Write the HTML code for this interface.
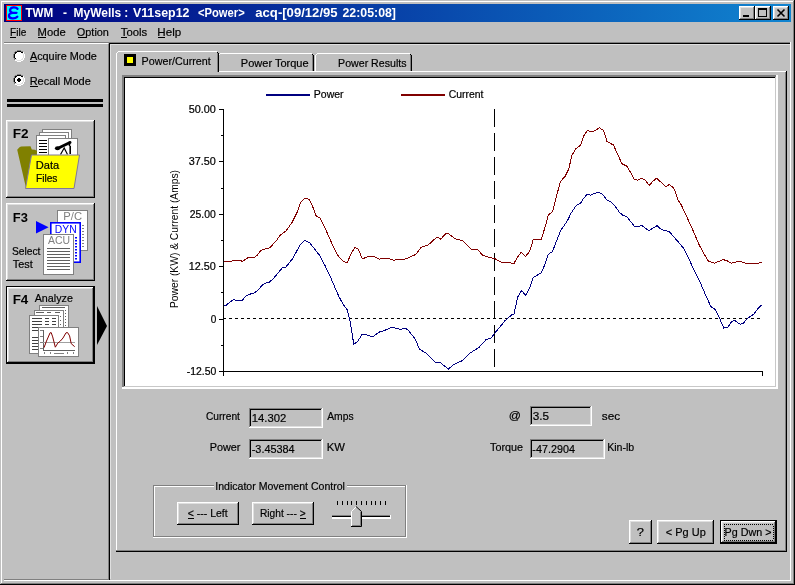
<!DOCTYPE html>
<html><head><meta charset="utf-8"><title>TWM</title>
<style>
html,body{margin:0;padding:0;background:#c0c0c0;width:795px;height:585px;overflow:hidden}
svg{display:block;font-family:"Liberation Sans",sans-serif;will-change:transform}
</style></head><body>
<svg width="795" height="585" viewBox="0 0 795 585">
<rect x="0" y="0" width="795" height="585" fill="#c0c0c0"/>
<rect x="1" y="1" width="793" height="1" fill="#fff"/>
<rect x="1" y="1" width="1" height="583" fill="#fff"/>
<rect x="0" y="584" width="795" height="1" fill="#000"/>
<rect x="794" y="0" width="1" height="585" fill="#000"/>
<rect x="1" y="583" width="793" height="1" fill="#808080"/>
<rect x="793" y="1" width="1" height="583" fill="#808080"/>
<defs><linearGradient id="tg" x1="0" x2="1" y1="0" y2="0"><stop offset="0" stop-color="#000080"/><stop offset="1" stop-color="#1084d0"/></linearGradient></defs>
<rect x="4" y="4" width="787" height="18" fill="url(#tg)"/>
<rect x="6" y="5" width="16" height="16" fill="#ff0000"/>
<rect x="7" y="6" width="14" height="14" fill="#00ffff"/>
<path d="M17.5,8.8 C16,6.8 11.2,6.6 10.2,9.5 C9.6,11.5 11.5,12.6 13,12.8 H16.5 M13,12.8 C10.5,12.8 8.8,14 9,16 C9.4,19 15.2,19 17.3,16.8" fill="none" stroke="#0000ff" stroke-width="2.3" stroke-linecap="round"/>
<text x="25.50" y="17" font-size="12" font-weight="bold" fill="#fff" textLength="27.84" lengthAdjust="spacingAndGlyphs">TWM</text>
<text x="63.00" y="17" font-size="12" font-weight="bold" fill="#fff" textLength="4.00" lengthAdjust="spacingAndGlyphs">-</text>
<text x="73.60" y="17" font-size="12" font-weight="bold" fill="#fff" textLength="47.69" lengthAdjust="spacingAndGlyphs">MyWells</text>
<text x="124.30" y="17" font-size="12" font-weight="bold" fill="#fff" textLength="4.00" lengthAdjust="spacingAndGlyphs">:</text>
<text x="132.90" y="17" font-size="12" font-weight="bold" fill="#fff" textLength="56.54" lengthAdjust="spacingAndGlyphs">V11sep12</text>
<text x="198.00" y="17" font-size="12" font-weight="bold" fill="#fff" textLength="46.73" lengthAdjust="spacingAndGlyphs">&lt;Power&gt;</text>
<text x="255.30" y="17" font-size="12" font-weight="bold" fill="#fff" textLength="82.33" lengthAdjust="spacingAndGlyphs">acq-[09/12/95</text>
<text x="342.50" y="17" font-size="12" font-weight="bold" fill="#fff" textLength="53.46" lengthAdjust="spacingAndGlyphs">22:05:08]</text>
<rect x="739" y="6" width="16" height="14" fill="#c0c0c0"/>
<rect x="739" y="6" width="16" height="1" fill="#fff"/>
<rect x="739" y="6" width="1" height="14" fill="#fff"/>
<rect x="740" y="7" width="14" height="1" fill="#dfdfdf"/>
<rect x="740" y="7" width="1" height="12" fill="#dfdfdf"/>
<rect x="740" y="18" width="14" height="1" fill="#808080"/>
<rect x="753" y="7" width="1" height="12" fill="#808080"/>
<rect x="739" y="19" width="16" height="1" fill="#000"/>
<rect x="754" y="6" width="1" height="14" fill="#000"/>
<rect x="755" y="6" width="16" height="14" fill="#c0c0c0"/>
<rect x="755" y="6" width="16" height="1" fill="#fff"/>
<rect x="755" y="6" width="1" height="14" fill="#fff"/>
<rect x="756" y="7" width="14" height="1" fill="#dfdfdf"/>
<rect x="756" y="7" width="1" height="12" fill="#dfdfdf"/>
<rect x="756" y="18" width="14" height="1" fill="#808080"/>
<rect x="769" y="7" width="1" height="12" fill="#808080"/>
<rect x="755" y="19" width="16" height="1" fill="#000"/>
<rect x="770" y="6" width="1" height="14" fill="#000"/>
<rect x="773" y="6" width="16" height="14" fill="#c0c0c0"/>
<rect x="773" y="6" width="16" height="1" fill="#fff"/>
<rect x="773" y="6" width="1" height="14" fill="#fff"/>
<rect x="774" y="7" width="14" height="1" fill="#dfdfdf"/>
<rect x="774" y="7" width="1" height="12" fill="#dfdfdf"/>
<rect x="774" y="18" width="14" height="1" fill="#808080"/>
<rect x="787" y="7" width="1" height="12" fill="#808080"/>
<rect x="773" y="19" width="16" height="1" fill="#000"/>
<rect x="788" y="6" width="1" height="14" fill="#000"/>
<rect x="743" y="15" width="6" height="2" fill="#000"/>
<rect x="758" y="8" width="9" height="9" fill="#000"/>
<rect x="759" y="10" width="7" height="6" fill="#c0c0c0"/>
<path d="M777.5,9.5 L784.5,16.5 M784.5,9.5 L777.5,16.5" stroke="#000" stroke-width="1.6"/>
<text x="10.12" y="36" font-size="11.5" fill="#000" stroke="#000" stroke-width="0.2" textLength="16.24" lengthAdjust="spacingAndGlyphs">File</text>
<text x="37.62" y="36" font-size="11.5" fill="#000" stroke="#000" stroke-width="0.2" textLength="28.14" lengthAdjust="spacingAndGlyphs">Mode</text>
<text x="76.85" y="36" font-size="11.5" fill="#000" stroke="#000" stroke-width="0.2" textLength="32.09" lengthAdjust="spacingAndGlyphs">Option</text>
<text x="120.80" y="36" font-size="11.5" fill="#000" stroke="#000" stroke-width="0.2" textLength="26.45" lengthAdjust="spacingAndGlyphs">Tools</text>
<text x="157.39" y="36" font-size="11.5" fill="#000" stroke="#000" stroke-width="0.2" textLength="23.87" lengthAdjust="spacingAndGlyphs">Help</text>
<rect x="10" y="37" width="6" height="1" fill="#000"/>
<rect x="38" y="37" width="8" height="1" fill="#000"/>
<rect x="78" y="37" width="8" height="1" fill="#000"/>
<rect x="121" y="37" width="6" height="1" fill="#000"/>
<rect x="158" y="37" width="7" height="1" fill="#000"/>
<rect x="4" y="42" width="787" height="1" fill="#808080"/>
<rect x="4" y="43" width="104" height="1" fill="#fff"/>
<rect x="109" y="43" width="681" height="1" fill="#000"/>
<rect x="109" y="43" width="1" height="537" fill="#000"/>
<rect x="108" y="44" width="1" height="536" fill="#808080"/>
<rect x="110" y="44" width="680" height="1" fill="#dfdfdf"/>
<rect x="110" y="44" width="1" height="535" fill="#dfdfdf"/>
<rect x="4" y="579" width="105" height="1" fill="#808080"/>
<rect x="4" y="580" width="787" height="1" fill="#fff"/>
<rect x="790" y="42" width="1" height="539" fill="#fff"/>
<rect x="17" y="50" width="1" height="1" fill="#808080"/>
<rect x="18" y="50" width="1" height="1" fill="#808080"/>
<rect x="19" y="50" width="1" height="1" fill="#808080"/>
<rect x="20" y="50" width="1" height="1" fill="#808080"/>
<rect x="15" y="51" width="1" height="1" fill="#808080"/>
<rect x="16" y="51" width="1" height="1" fill="#808080"/>
<rect x="17" y="51" width="1" height="1" fill="#000"/>
<rect x="18" y="51" width="1" height="1" fill="#000"/>
<rect x="19" y="51" width="1" height="1" fill="#000"/>
<rect x="20" y="51" width="1" height="1" fill="#000"/>
<rect x="21" y="51" width="1" height="1" fill="#808080"/>
<rect x="22" y="51" width="1" height="1" fill="#808080"/>
<rect x="14" y="52" width="1" height="1" fill="#808080"/>
<rect x="15" y="52" width="1" height="1" fill="#000"/>
<rect x="16" y="52" width="1" height="1" fill="#000"/>
<rect x="17" y="52" width="1" height="1" fill="#fff"/>
<rect x="18" y="52" width="1" height="1" fill="#fff"/>
<rect x="19" y="52" width="1" height="1" fill="#fff"/>
<rect x="20" y="52" width="1" height="1" fill="#fff"/>
<rect x="21" y="52" width="1" height="1" fill="#000"/>
<rect x="22" y="52" width="1" height="1" fill="#000"/>
<rect x="23" y="52" width="1" height="1" fill="#fff"/>
<rect x="14" y="53" width="1" height="1" fill="#808080"/>
<rect x="15" y="53" width="1" height="1" fill="#000"/>
<rect x="16" y="53" width="1" height="1" fill="#fff"/>
<rect x="17" y="53" width="1" height="1" fill="#fff"/>
<rect x="18" y="53" width="1" height="1" fill="#fff"/>
<rect x="19" y="53" width="1" height="1" fill="#fff"/>
<rect x="20" y="53" width="1" height="1" fill="#fff"/>
<rect x="21" y="53" width="1" height="1" fill="#fff"/>
<rect x="22" y="53" width="1" height="1" fill="#dfdfdf"/>
<rect x="23" y="53" width="1" height="1" fill="#fff"/>
<rect x="13" y="54" width="1" height="1" fill="#808080"/>
<rect x="14" y="54" width="1" height="1" fill="#000"/>
<rect x="15" y="54" width="1" height="1" fill="#fff"/>
<rect x="16" y="54" width="1" height="1" fill="#fff"/>
<rect x="17" y="54" width="1" height="1" fill="#fff"/>
<rect x="18" y="54" width="1" height="1" fill="#fff"/>
<rect x="19" y="54" width="1" height="1" fill="#fff"/>
<rect x="20" y="54" width="1" height="1" fill="#fff"/>
<rect x="21" y="54" width="1" height="1" fill="#fff"/>
<rect x="22" y="54" width="1" height="1" fill="#fff"/>
<rect x="23" y="54" width="1" height="1" fill="#dfdfdf"/>
<rect x="24" y="54" width="1" height="1" fill="#fff"/>
<rect x="13" y="55" width="1" height="1" fill="#808080"/>
<rect x="14" y="55" width="1" height="1" fill="#000"/>
<rect x="15" y="55" width="1" height="1" fill="#fff"/>
<rect x="16" y="55" width="1" height="1" fill="#fff"/>
<rect x="17" y="55" width="1" height="1" fill="#fff"/>
<rect x="18" y="55" width="1" height="1" fill="#fff"/>
<rect x="19" y="55" width="1" height="1" fill="#fff"/>
<rect x="20" y="55" width="1" height="1" fill="#fff"/>
<rect x="21" y="55" width="1" height="1" fill="#fff"/>
<rect x="22" y="55" width="1" height="1" fill="#fff"/>
<rect x="23" y="55" width="1" height="1" fill="#dfdfdf"/>
<rect x="24" y="55" width="1" height="1" fill="#fff"/>
<rect x="13" y="56" width="1" height="1" fill="#808080"/>
<rect x="14" y="56" width="1" height="1" fill="#000"/>
<rect x="15" y="56" width="1" height="1" fill="#fff"/>
<rect x="16" y="56" width="1" height="1" fill="#fff"/>
<rect x="17" y="56" width="1" height="1" fill="#fff"/>
<rect x="18" y="56" width="1" height="1" fill="#fff"/>
<rect x="19" y="56" width="1" height="1" fill="#fff"/>
<rect x="20" y="56" width="1" height="1" fill="#fff"/>
<rect x="21" y="56" width="1" height="1" fill="#fff"/>
<rect x="22" y="56" width="1" height="1" fill="#fff"/>
<rect x="23" y="56" width="1" height="1" fill="#dfdfdf"/>
<rect x="24" y="56" width="1" height="1" fill="#fff"/>
<rect x="13" y="57" width="1" height="1" fill="#808080"/>
<rect x="14" y="57" width="1" height="1" fill="#000"/>
<rect x="15" y="57" width="1" height="1" fill="#fff"/>
<rect x="16" y="57" width="1" height="1" fill="#fff"/>
<rect x="17" y="57" width="1" height="1" fill="#fff"/>
<rect x="18" y="57" width="1" height="1" fill="#fff"/>
<rect x="19" y="57" width="1" height="1" fill="#fff"/>
<rect x="20" y="57" width="1" height="1" fill="#fff"/>
<rect x="21" y="57" width="1" height="1" fill="#fff"/>
<rect x="22" y="57" width="1" height="1" fill="#fff"/>
<rect x="23" y="57" width="1" height="1" fill="#dfdfdf"/>
<rect x="24" y="57" width="1" height="1" fill="#fff"/>
<rect x="14" y="58" width="1" height="1" fill="#808080"/>
<rect x="15" y="58" width="1" height="1" fill="#000"/>
<rect x="16" y="58" width="1" height="1" fill="#fff"/>
<rect x="17" y="58" width="1" height="1" fill="#fff"/>
<rect x="18" y="58" width="1" height="1" fill="#fff"/>
<rect x="19" y="58" width="1" height="1" fill="#fff"/>
<rect x="20" y="58" width="1" height="1" fill="#fff"/>
<rect x="21" y="58" width="1" height="1" fill="#fff"/>
<rect x="22" y="58" width="1" height="1" fill="#dfdfdf"/>
<rect x="23" y="58" width="1" height="1" fill="#fff"/>
<rect x="14" y="59" width="1" height="1" fill="#808080"/>
<rect x="15" y="59" width="1" height="1" fill="#dfdfdf"/>
<rect x="16" y="59" width="1" height="1" fill="#dfdfdf"/>
<rect x="17" y="59" width="1" height="1" fill="#fff"/>
<rect x="18" y="59" width="1" height="1" fill="#fff"/>
<rect x="19" y="59" width="1" height="1" fill="#fff"/>
<rect x="20" y="59" width="1" height="1" fill="#fff"/>
<rect x="21" y="59" width="1" height="1" fill="#dfdfdf"/>
<rect x="22" y="59" width="1" height="1" fill="#dfdfdf"/>
<rect x="23" y="59" width="1" height="1" fill="#fff"/>
<rect x="15" y="60" width="1" height="1" fill="#fff"/>
<rect x="16" y="60" width="1" height="1" fill="#fff"/>
<rect x="17" y="60" width="1" height="1" fill="#dfdfdf"/>
<rect x="18" y="60" width="1" height="1" fill="#dfdfdf"/>
<rect x="19" y="60" width="1" height="1" fill="#dfdfdf"/>
<rect x="20" y="60" width="1" height="1" fill="#dfdfdf"/>
<rect x="21" y="60" width="1" height="1" fill="#fff"/>
<rect x="22" y="60" width="1" height="1" fill="#fff"/>
<rect x="17" y="61" width="1" height="1" fill="#fff"/>
<rect x="18" y="61" width="1" height="1" fill="#fff"/>
<rect x="19" y="61" width="1" height="1" fill="#fff"/>
<rect x="20" y="61" width="1" height="1" fill="#fff"/>
<rect x="17" y="74" width="1" height="1" fill="#808080"/>
<rect x="18" y="74" width="1" height="1" fill="#808080"/>
<rect x="19" y="74" width="1" height="1" fill="#808080"/>
<rect x="20" y="74" width="1" height="1" fill="#808080"/>
<rect x="15" y="75" width="1" height="1" fill="#808080"/>
<rect x="16" y="75" width="1" height="1" fill="#808080"/>
<rect x="17" y="75" width="1" height="1" fill="#000"/>
<rect x="18" y="75" width="1" height="1" fill="#000"/>
<rect x="19" y="75" width="1" height="1" fill="#000"/>
<rect x="20" y="75" width="1" height="1" fill="#000"/>
<rect x="21" y="75" width="1" height="1" fill="#808080"/>
<rect x="22" y="75" width="1" height="1" fill="#808080"/>
<rect x="14" y="76" width="1" height="1" fill="#808080"/>
<rect x="15" y="76" width="1" height="1" fill="#000"/>
<rect x="16" y="76" width="1" height="1" fill="#000"/>
<rect x="17" y="76" width="1" height="1" fill="#fff"/>
<rect x="18" y="76" width="1" height="1" fill="#fff"/>
<rect x="19" y="76" width="1" height="1" fill="#fff"/>
<rect x="20" y="76" width="1" height="1" fill="#fff"/>
<rect x="21" y="76" width="1" height="1" fill="#000"/>
<rect x="22" y="76" width="1" height="1" fill="#000"/>
<rect x="23" y="76" width="1" height="1" fill="#fff"/>
<rect x="14" y="77" width="1" height="1" fill="#808080"/>
<rect x="15" y="77" width="1" height="1" fill="#000"/>
<rect x="16" y="77" width="1" height="1" fill="#fff"/>
<rect x="17" y="77" width="1" height="1" fill="#fff"/>
<rect x="18" y="77" width="1" height="1" fill="#fff"/>
<rect x="19" y="77" width="1" height="1" fill="#fff"/>
<rect x="20" y="77" width="1" height="1" fill="#fff"/>
<rect x="21" y="77" width="1" height="1" fill="#fff"/>
<rect x="22" y="77" width="1" height="1" fill="#dfdfdf"/>
<rect x="23" y="77" width="1" height="1" fill="#fff"/>
<rect x="13" y="78" width="1" height="1" fill="#808080"/>
<rect x="14" y="78" width="1" height="1" fill="#000"/>
<rect x="15" y="78" width="1" height="1" fill="#fff"/>
<rect x="16" y="78" width="1" height="1" fill="#fff"/>
<rect x="17" y="78" width="1" height="1" fill="#fff"/>
<rect x="18" y="78" width="1" height="1" fill="#000"/>
<rect x="19" y="78" width="1" height="1" fill="#000"/>
<rect x="20" y="78" width="1" height="1" fill="#fff"/>
<rect x="21" y="78" width="1" height="1" fill="#fff"/>
<rect x="22" y="78" width="1" height="1" fill="#fff"/>
<rect x="23" y="78" width="1" height="1" fill="#dfdfdf"/>
<rect x="24" y="78" width="1" height="1" fill="#fff"/>
<rect x="13" y="79" width="1" height="1" fill="#808080"/>
<rect x="14" y="79" width="1" height="1" fill="#000"/>
<rect x="15" y="79" width="1" height="1" fill="#fff"/>
<rect x="16" y="79" width="1" height="1" fill="#fff"/>
<rect x="17" y="79" width="1" height="1" fill="#000"/>
<rect x="18" y="79" width="1" height="1" fill="#000"/>
<rect x="19" y="79" width="1" height="1" fill="#000"/>
<rect x="20" y="79" width="1" height="1" fill="#000"/>
<rect x="21" y="79" width="1" height="1" fill="#fff"/>
<rect x="22" y="79" width="1" height="1" fill="#fff"/>
<rect x="23" y="79" width="1" height="1" fill="#dfdfdf"/>
<rect x="24" y="79" width="1" height="1" fill="#fff"/>
<rect x="13" y="80" width="1" height="1" fill="#808080"/>
<rect x="14" y="80" width="1" height="1" fill="#000"/>
<rect x="15" y="80" width="1" height="1" fill="#fff"/>
<rect x="16" y="80" width="1" height="1" fill="#fff"/>
<rect x="17" y="80" width="1" height="1" fill="#000"/>
<rect x="18" y="80" width="1" height="1" fill="#000"/>
<rect x="19" y="80" width="1" height="1" fill="#000"/>
<rect x="20" y="80" width="1" height="1" fill="#000"/>
<rect x="21" y="80" width="1" height="1" fill="#fff"/>
<rect x="22" y="80" width="1" height="1" fill="#fff"/>
<rect x="23" y="80" width="1" height="1" fill="#dfdfdf"/>
<rect x="24" y="80" width="1" height="1" fill="#fff"/>
<rect x="13" y="81" width="1" height="1" fill="#808080"/>
<rect x="14" y="81" width="1" height="1" fill="#000"/>
<rect x="15" y="81" width="1" height="1" fill="#fff"/>
<rect x="16" y="81" width="1" height="1" fill="#fff"/>
<rect x="17" y="81" width="1" height="1" fill="#fff"/>
<rect x="18" y="81" width="1" height="1" fill="#000"/>
<rect x="19" y="81" width="1" height="1" fill="#000"/>
<rect x="20" y="81" width="1" height="1" fill="#fff"/>
<rect x="21" y="81" width="1" height="1" fill="#fff"/>
<rect x="22" y="81" width="1" height="1" fill="#fff"/>
<rect x="23" y="81" width="1" height="1" fill="#dfdfdf"/>
<rect x="24" y="81" width="1" height="1" fill="#fff"/>
<rect x="14" y="82" width="1" height="1" fill="#808080"/>
<rect x="15" y="82" width="1" height="1" fill="#000"/>
<rect x="16" y="82" width="1" height="1" fill="#fff"/>
<rect x="17" y="82" width="1" height="1" fill="#fff"/>
<rect x="18" y="82" width="1" height="1" fill="#fff"/>
<rect x="19" y="82" width="1" height="1" fill="#fff"/>
<rect x="20" y="82" width="1" height="1" fill="#fff"/>
<rect x="21" y="82" width="1" height="1" fill="#fff"/>
<rect x="22" y="82" width="1" height="1" fill="#dfdfdf"/>
<rect x="23" y="82" width="1" height="1" fill="#fff"/>
<rect x="14" y="83" width="1" height="1" fill="#808080"/>
<rect x="15" y="83" width="1" height="1" fill="#dfdfdf"/>
<rect x="16" y="83" width="1" height="1" fill="#dfdfdf"/>
<rect x="17" y="83" width="1" height="1" fill="#fff"/>
<rect x="18" y="83" width="1" height="1" fill="#fff"/>
<rect x="19" y="83" width="1" height="1" fill="#fff"/>
<rect x="20" y="83" width="1" height="1" fill="#fff"/>
<rect x="21" y="83" width="1" height="1" fill="#dfdfdf"/>
<rect x="22" y="83" width="1" height="1" fill="#dfdfdf"/>
<rect x="23" y="83" width="1" height="1" fill="#fff"/>
<rect x="15" y="84" width="1" height="1" fill="#fff"/>
<rect x="16" y="84" width="1" height="1" fill="#fff"/>
<rect x="17" y="84" width="1" height="1" fill="#dfdfdf"/>
<rect x="18" y="84" width="1" height="1" fill="#dfdfdf"/>
<rect x="19" y="84" width="1" height="1" fill="#dfdfdf"/>
<rect x="20" y="84" width="1" height="1" fill="#dfdfdf"/>
<rect x="21" y="84" width="1" height="1" fill="#fff"/>
<rect x="22" y="84" width="1" height="1" fill="#fff"/>
<rect x="17" y="85" width="1" height="1" fill="#fff"/>
<rect x="18" y="85" width="1" height="1" fill="#fff"/>
<rect x="19" y="85" width="1" height="1" fill="#fff"/>
<rect x="20" y="85" width="1" height="1" fill="#fff"/>
<text x="29.90" y="60" font-size="11.5" fill="#000" stroke="#000" stroke-width="0.2" textLength="67.01" lengthAdjust="spacingAndGlyphs">Acquire Mode</text>
<rect x="30" y="61" width="7" height="1" fill="#000"/>
<text x="29.64" y="85" font-size="11.5" fill="#000" stroke="#000" stroke-width="0.2" textLength="61.24" lengthAdjust="spacingAndGlyphs">Recall Mode</text>
<rect x="30" y="86" width="8" height="1" fill="#000"/>
<rect x="7" y="99" width="96" height="3" fill="#000"/>
<rect x="7" y="104" width="96" height="3" fill="#000"/>
<rect x="6" y="120" width="89" height="78" fill="#c0c0c0"/>
<rect x="6" y="120" width="89" height="1" fill="#fff"/>
<rect x="6" y="120" width="1" height="78" fill="#fff"/>
<rect x="7" y="121" width="87" height="1" fill="#dfdfdf"/>
<rect x="7" y="121" width="1" height="76" fill="#dfdfdf"/>
<rect x="7" y="196" width="87" height="1" fill="#808080"/>
<rect x="93" y="121" width="1" height="76" fill="#808080"/>
<rect x="6" y="197" width="89" height="1" fill="#000"/>
<rect x="94" y="120" width="1" height="78" fill="#000"/>
<rect x="6" y="203" width="89" height="78" fill="#c0c0c0"/>
<rect x="6" y="203" width="89" height="1" fill="#fff"/>
<rect x="6" y="203" width="1" height="78" fill="#fff"/>
<rect x="7" y="204" width="87" height="1" fill="#dfdfdf"/>
<rect x="7" y="204" width="1" height="76" fill="#dfdfdf"/>
<rect x="7" y="279" width="87" height="1" fill="#808080"/>
<rect x="93" y="204" width="1" height="76" fill="#808080"/>
<rect x="6" y="280" width="89" height="1" fill="#000"/>
<rect x="94" y="203" width="1" height="78" fill="#000"/>
<rect x="6" y="286" width="89" height="78" fill="#000"/>
<rect x="7" y="287" width="87" height="76" fill="#c0c0c0"/>
<rect x="7" y="287" width="87" height="1" fill="#fff"/>
<rect x="7" y="287" width="1" height="76" fill="#fff"/>
<rect x="8" y="288" width="85" height="1" fill="#dfdfdf"/>
<rect x="8" y="288" width="1" height="74" fill="#dfdfdf"/>
<rect x="8" y="361" width="85" height="1" fill="#808080"/>
<rect x="92" y="288" width="1" height="74" fill="#808080"/>
<rect x="7" y="362" width="87" height="1" fill="#000"/>
<rect x="93" y="287" width="1" height="76" fill="#000"/>
<polygon points="97,306 97,345 107,326" fill="#000"/>
<text x="12.72" y="137.5" font-size="13" font-weight="bold" fill="#000" textLength="15.85" lengthAdjust="spacingAndGlyphs">F2</text>
<text x="12.81" y="221.5" font-size="13" font-weight="bold" fill="#000" textLength="15.06" lengthAdjust="spacingAndGlyphs">F3</text>
<text x="12.67" y="304.3" font-size="13" font-weight="bold" fill="#000" textLength="15.61" lengthAdjust="spacingAndGlyphs">F4</text>
<rect x="42.5" y="129.5" width="29" height="27" fill="#fff" stroke="#808080"/>
<rect x="39.5" y="132.5" width="29" height="24" fill="#fff" stroke="#808080"/>
<rect x="36.5" y="135.5" width="29" height="21" fill="#fff" stroke="#808080"/>
<rect x="39" y="140" width="8" height="1" fill="#000"/>
<rect x="39" y="143" width="8" height="1" fill="#000"/>
<rect x="39" y="146" width="8" height="1" fill="#000"/>
<rect x="39" y="149" width="8" height="1" fill="#000"/>
<rect x="39" y="152" width="8" height="1" fill="#000"/>
<rect x="48.5" y="138.5" width="29" height="18" fill="#fff" stroke="#808080"/>
<path d="M57.5,148.5 L70,142.5" stroke="#000" stroke-width="3" stroke-linecap="round"/>
<ellipse cx="57.5" cy="148.3" rx="2.6" ry="2" fill="#000"/>
<path d="M69.5,141.5 L69.5,146 M70.2,146 L70.2,154" stroke="#000" stroke-width="1.6"/>
<path d="M60.5,154.5 L64.2,148 L67.5,154.5" stroke="#000" stroke-width="1.2" fill="none"/>
<polygon points="17.2,149.8 19.5,147.3 21,146.4 30.5,146.2 31.8,149.4 35,149.8 37,151 36,188 26,188" fill="#808000"/>
<polygon points="31.5,155 79.5,155 74,188.5 25.5,188.5" fill="#ffff00" stroke="#80789a" stroke-width="1"/>
<text x="35.83" y="168.5" font-size="11.5" fill="#000" stroke="#000" stroke-width="0.2" textLength="23.45" lengthAdjust="spacingAndGlyphs">Data</text>
<text x="35.91" y="181.5" font-size="11.5" fill="#000" stroke="#000" stroke-width="0.2" textLength="21.54" lengthAdjust="spacingAndGlyphs">Files</text>
<rect x="57.5" y="210.5" width="30" height="40" fill="#fff" stroke="#808080"/>
<text x="63.33" y="220.4" font-size="10.5" fill="#808080" textLength="18.72" lengthAdjust="spacingAndGlyphs">P/C</text>
<rect x="82" y="225" width="2" height="1" fill="#808080"/>
<rect x="82" y="228" width="2" height="1" fill="#808080"/>
<rect x="82" y="231" width="2" height="1" fill="#808080"/>
<rect x="82" y="234" width="2" height="1" fill="#808080"/>
<rect x="82" y="237" width="2" height="1" fill="#808080"/>
<rect x="82" y="240" width="2" height="1" fill="#808080"/>
<rect x="82" y="243" width="2" height="1" fill="#808080"/>
<rect x="82" y="246" width="2" height="1" fill="#808080"/>
<rect x="50.8" y="222.8" width="29.4" height="39.4" fill="#fff" stroke="#0000ff" stroke-width="1.6"/>
<text x="54.82" y="232.7" font-size="10.5" fill="#0000ff" textLength="21.84" lengthAdjust="spacingAndGlyphs">DYN</text>
<rect x="75" y="237" width="2" height="1.5" fill="#0000ff"/>
<rect x="75" y="240" width="2" height="1.5" fill="#0000ff"/>
<rect x="75" y="243" width="2" height="1.5" fill="#0000ff"/>
<rect x="75" y="246" width="2" height="1.5" fill="#0000ff"/>
<rect x="75" y="249" width="2" height="1.5" fill="#0000ff"/>
<rect x="75" y="252" width="2" height="1.5" fill="#0000ff"/>
<rect x="75" y="255" width="2" height="1.5" fill="#0000ff"/>
<rect x="75" y="258" width="2" height="1.5" fill="#0000ff"/>
<rect x="43.5" y="234.5" width="30" height="40" fill="#fff" stroke="#808080"/>
<text x="48.00" y="243.5" font-size="10.5" fill="#808080" textLength="22.07" lengthAdjust="spacingAndGlyphs">ACU</text>
<rect x="47" y="248" width="23" height="1" fill="#606060"/>
<rect x="47" y="251" width="23" height="1" fill="#606060"/>
<rect x="47" y="254" width="23" height="1" fill="#606060"/>
<rect x="47" y="257" width="23" height="1" fill="#606060"/>
<rect x="47" y="260" width="23" height="1" fill="#606060"/>
<rect x="47" y="263" width="23" height="1" fill="#606060"/>
<rect x="47" y="266" width="23" height="1" fill="#606060"/>
<rect x="47" y="269" width="23" height="1" fill="#606060"/>
<polygon points="36,221 36,233.5 48.6,227.2" fill="#0000ff"/>
<text x="11.91" y="254.7" font-size="11.5" fill="#000" stroke="#000" stroke-width="0.2" textLength="28.57" lengthAdjust="spacingAndGlyphs">Select</text>
<text x="12.80" y="267.5" font-size="11.5" fill="#000" stroke="#000" stroke-width="0.2" textLength="19.99" lengthAdjust="spacingAndGlyphs">Test</text>
<text x="34.70" y="302" font-size="11.5" fill="#000" stroke="#000" stroke-width="0.2" textLength="38.16" lengthAdjust="spacingAndGlyphs">Analyze</text>
<rect x="39.5" y="305.5" width="29" height="24" fill="#fff" stroke="#808080"/>
<rect x="42" y="307" width="23" height="1" fill="#606060"/>
<rect x="65" y="310" width="1" height="1" fill="#606060"/>
<rect x="65" y="313" width="1" height="1" fill="#606060"/>
<rect x="65" y="316" width="1" height="1" fill="#606060"/>
<rect x="65" y="319" width="1" height="1" fill="#606060"/>
<rect x="65" y="322" width="1" height="1" fill="#606060"/>
<rect x="65" y="325" width="1" height="1" fill="#606060"/>
<rect x="34.5" y="310.5" width="29" height="24" fill="#fff" stroke="#808080"/>
<rect x="36" y="312" width="8" height="1" fill="#606060"/>
<rect x="47" y="312" width="4" height="1" fill="#606060"/>
<rect x="55" y="312" width="5" height="1" fill="#606060"/>
<rect x="60" y="316" width="1" height="1" fill="#606060"/>
<rect x="60" y="320" width="1" height="1" fill="#606060"/>
<rect x="60" y="324" width="1" height="1" fill="#606060"/>
<rect x="60" y="328" width="1" height="1" fill="#606060"/>
<rect x="29.5" y="315.5" width="29" height="38" fill="#fff" stroke="#808080"/>
<rect x="32" y="318" width="10" height="1" fill="#404040"/>
<rect x="45" y="318" width="4" height="1" fill="#404040"/>
<rect x="52" y="318" width="4" height="1" fill="#404040"/>
<rect x="32" y="321" width="10" height="1" fill="#404040"/>
<rect x="45" y="321" width="4" height="1" fill="#404040"/>
<rect x="52" y="321" width="4" height="1" fill="#404040"/>
<rect x="32" y="324" width="10" height="1" fill="#404040"/>
<rect x="45" y="324" width="4" height="1" fill="#404040"/>
<rect x="52" y="324" width="4" height="1" fill="#404040"/>
<rect x="32" y="327" width="10" height="1" fill="#404040"/>
<rect x="45" y="327" width="4" height="1" fill="#404040"/>
<rect x="52" y="327" width="4" height="1" fill="#404040"/>
<rect x="32" y="330" width="10" height="1" fill="#404040"/>
<rect x="45" y="330" width="4" height="1" fill="#404040"/>
<rect x="52" y="330" width="4" height="1" fill="#404040"/>
<rect x="32" y="337" width="10" height="1" fill="#404040"/>
<rect x="32" y="340" width="10" height="1" fill="#404040"/>
<rect x="32" y="343" width="10" height="1" fill="#404040"/>
<rect x="32" y="346" width="10" height="1" fill="#404040"/>
<rect x="32" y="349" width="10" height="1" fill="#404040"/>
<rect x="38.5" y="327.5" width="40" height="29" fill="#fff" stroke="#808080"/>
<rect x="43" y="330" width="1" height="21" fill="#606060"/>
<rect x="43" y="350" width="32" height="1" fill="#606060"/>
<rect x="43" y="342" width="32" height="1" fill="#a0a0a0"/>
<rect x="40" y="330" width="3" height="1" fill="#808080"/>
<rect x="40" y="336" width="3" height="1" fill="#808080"/>
<rect x="40" y="342" width="3" height="1" fill="#808080"/>
<rect x="40" y="348" width="3" height="1" fill="#808080"/>
<rect x="44" y="352" width="1" height="2" fill="#808080"/>
<rect x="50" y="352" width="1" height="2" fill="#808080"/>
<rect x="67" y="352" width="1" height="2" fill="#808080"/>
<rect x="73" y="352" width="1" height="2" fill="#808080"/>
<rect x="54" y="353" width="10" height="1" fill="#808080"/>
<polyline points="44,347.7 46.5,341 50.1,332.8 51.2,332.6 52.7,336.9 55.3,347.2 57.8,343.1 60.4,341 63,338 66,332.8 67.6,332.6 69.6,335.9 71.2,343.6 74.7,346.7" fill="none" stroke="#800000" stroke-width="1"/>
<rect x="116" y="71" width="671" height="481" fill="#c0c0c0"/>
<rect x="116" y="71" width="670" height="1" fill="#fff"/>
<rect x="116" y="71" width="1" height="480" fill="#fff"/>
<rect x="116" y="550" width="670" height="1" fill="#808080"/>
<rect x="785" y="72" width="1" height="479" fill="#808080"/>
<rect x="116" y="551" width="671" height="1" fill="#000"/>
<rect x="786" y="71" width="1" height="481" fill="#000"/>
<rect x="316" y="54" width="95" height="17" fill="#c0c0c0"/>
<rect x="317" y="53" width="93" height="1" fill="#fff"/>
<rect x="315" y="55" width="1" height="16" fill="#fff"/>
<rect x="316" y="54" width="1" height="1" fill="#fff"/>
<rect x="410" y="54" width="1" height="17" fill="#808080"/>
<rect x="411" y="55" width="1" height="16" fill="#000"/>
<rect x="410" y="54" width="1" height="1" fill="#000"/>
<rect x="219" y="54" width="94" height="17" fill="#c0c0c0"/>
<rect x="220" y="53" width="92" height="1" fill="#fff"/>
<rect x="218" y="55" width="1" height="16" fill="#fff"/>
<rect x="219" y="54" width="1" height="1" fill="#fff"/>
<rect x="312" y="54" width="1" height="17" fill="#808080"/>
<rect x="313" y="55" width="1" height="16" fill="#000"/>
<rect x="312" y="54" width="1" height="1" fill="#000"/>
<rect x="219" y="71" width="567" height="1" fill="#fff"/>
<rect x="117" y="52" width="101" height="20" fill="#c0c0c0"/>
<rect x="118" y="51" width="99" height="1" fill="#fff"/>
<rect x="116" y="53" width="1" height="19" fill="#fff"/>
<rect x="117" y="52" width="1" height="1" fill="#fff"/>
<rect x="217" y="52" width="1" height="20" fill="#808080"/>
<rect x="218" y="53" width="1" height="19" fill="#000"/>
<rect x="217" y="52" width="1" height="1" fill="#000"/>
<rect x="117" y="71" width="100" height="1" fill="#c0c0c0"/>
<text x="141.57" y="65" font-size="11.5" fill="#000" stroke="#000" stroke-width="0.2" textLength="69.16" lengthAdjust="spacingAndGlyphs">Power/Current</text>
<text x="240.84" y="67" font-size="11.5" fill="#000" stroke="#000" stroke-width="0.2" textLength="67.78" lengthAdjust="spacingAndGlyphs">Power Torque</text>
<text x="338.08" y="67" font-size="11.5" fill="#000" stroke="#000" stroke-width="0.2" textLength="68.45" lengthAdjust="spacingAndGlyphs">Power Results</text>
<rect x="124" y="54" width="12" height="12" fill="#000"/>
<rect x="127" y="57" width="6" height="6" fill="#ffff00"/>
<rect x="122" y="75" width="656" height="314" fill="#fff"/>
<rect x="122" y="75" width="656" height="2" fill="#808080"/>
<rect x="122" y="75" width="2" height="314" fill="#808080"/>
<rect x="124" y="77" width="652" height="1" fill="#000"/>
<rect x="124" y="77" width="1" height="310" fill="#000"/>
<rect x="124" y="386" width="652" height="1" fill="#c8c8c8"/>
<rect x="775" y="77" width="1" height="310" fill="#c8c8c8"/>
<rect x="122" y="387" width="656" height="2" fill="#fff"/>
<rect x="776" y="75" width="2" height="314" fill="#fff"/>
<rect x="266" y="94" width="44" height="2" fill="#000080"/>
<text x="313.85" y="98" font-size="10" fill="#000" stroke="#000" stroke-width="0.2" textLength="29.72" lengthAdjust="spacingAndGlyphs">Power</text>
<rect x="401" y="94" width="44" height="2" fill="#800000"/>
<text x="448.66" y="98" font-size="10" fill="#000" stroke="#000" stroke-width="0.2" textLength="34.71" lengthAdjust="spacingAndGlyphs">Current</text>
<rect x="223" y="109" width="1" height="267" fill="#000"/>
<rect x="223" y="371" width="540" height="1" fill="#000"/>
<rect x="762" y="371" width="1" height="5" fill="#000"/>
<rect x="219" y="109" width="4" height="1" fill="#000"/>
<rect x="221" y="135" width="2" height="1" fill="#000"/>
<rect x="219" y="161" width="4" height="1" fill="#000"/>
<rect x="221" y="188" width="2" height="1" fill="#000"/>
<rect x="219" y="214" width="4" height="1" fill="#000"/>
<rect x="221" y="240" width="2" height="1" fill="#000"/>
<rect x="219" y="266" width="4" height="1" fill="#000"/>
<rect x="221" y="292" width="2" height="1" fill="#000"/>
<rect x="219" y="319" width="4" height="1" fill="#000"/>
<rect x="221" y="345" width="2" height="1" fill="#000"/>
<rect x="219" y="371" width="4" height="1" fill="#000"/>
<text x="188.72" y="113" font-size="10" fill="#000" stroke="#000" stroke-width="0.2" textLength="27.12" lengthAdjust="spacingAndGlyphs">50.00</text>
<text x="188.72" y="165.4" font-size="10" fill="#000" stroke="#000" stroke-width="0.2" textLength="27.12" lengthAdjust="spacingAndGlyphs">37.50</text>
<text x="189.80" y="217.8" font-size="10" fill="#000" stroke="#000" stroke-width="0.2" textLength="26.03" lengthAdjust="spacingAndGlyphs">25.00</text>
<text x="188.72" y="270.2" font-size="10" fill="#000" stroke="#000" stroke-width="0.2" textLength="27.12" lengthAdjust="spacingAndGlyphs">12.50</text>
<text x="210.80" y="322.6" font-size="10" fill="#000" stroke="#000" stroke-width="0.2" textLength="5.56" lengthAdjust="spacingAndGlyphs">0</text>
<text x="186.80" y="375" font-size="10" fill="#000" stroke="#000" stroke-width="0.2" textLength="29.57" lengthAdjust="spacingAndGlyphs">-12.50</text>
<line x1="223" y1="318.5" x2="761" y2="318.5" stroke="#000" stroke-width="1" stroke-dasharray="3,3"/>
<line x1="494.5" y1="109" x2="494.5" y2="367" stroke="#000" stroke-width="1" stroke-dasharray="18,6"/>
<text transform="translate(177.5,308) rotate(-90)" font-size="10" textLength="138" lengthAdjust="spacingAndGlyphs">Power (KW) &amp; Current (Amps)</text>
<polyline points="224.2,261.5 231.2,261.5 233.1,260.3 240.5,260.3 242.3,261.5 247.8,257.8 254.6,257.2 257.1,255.4 260.8,250.5 263.8,249.2 268.8,248.4 271.2,246.2 276.8,240.2 280.0,235.3 286.0,231.0 292.0,222.5 297.1,212.2 300.5,202.8 304.8,198.2 309.1,199.4 312.5,206.2 315.9,215.6 320.2,218.2 325.3,228.5 331.3,242.1 336.4,253.2 339.7,257.9 343.5,261.6 347.2,262.6 351.0,254.1 354.7,247.5 358.5,249.4 362.3,258.8 368.8,256.5 374.5,256.5 379.2,259.2 384.8,258.2 389.5,258.8 393.7,260.4 397.4,259.2 404.9,259.2 409.8,257.2 416.0,254.3 421.0,247.3 428.4,244.8 437.1,236.9 440.8,239.1 445.8,233.7 448.8,233.8 455.0,238.8 462.6,240.6 471.4,249.4 477.7,249.6 482.7,255.2 489.0,257.2 495.3,258.9 501.5,262.2 512.8,263.2 514.1,263.3 517.5,257.1 521.2,252.2 525.5,256.4 529.7,251.4 533.2,239.6 541.2,239.3 544.8,228.0 548.4,214.9 552.8,211.3 555.7,198.9 558.3,189.4 560.4,181.6 565.2,176.2 568.8,169.0 571.7,155.9 575.9,148.7 580.7,145.1 583.7,136.1 587.3,130.5 591.5,132.0 595.7,130.2 599.3,127.8 603.4,130.2 607.0,141.5 613.6,145.1 617.2,153.5 622.0,163.7 626.8,166.1 631.0,173.2 634.3,179.4 637.7,180.3 642.0,178.2 645.4,180.3 649.1,185.4 653.1,181.1 656.5,178.2 660.8,182.0 665.9,186.6 669.3,184.5 672.7,187.1 675.3,191.4 677.9,199.9 681.3,205.0 688.1,219.6 695.0,235.0 699.2,245.0 703.8,253.5 708.5,261.2 714.6,263.2 719.2,261.2 723.1,259.6 726.9,260.7 731.5,263.2 736.2,261.9 739.2,261.2 745.4,263.2 751.5,263.2 757.7,263.5 761.5,262.2" fill="none" stroke="#800000" stroke-width="1" stroke-linejoin="round" shape-rendering="crispEdges"/>
<polyline points="224.2,305.5 226.3,305.2 230.6,301.5 233.7,299.7 236.8,300.3 242.3,300.3 246.0,296.0 249.7,294.2 254.0,293.2 258.9,289.2 262.6,284.6 265.7,283.1 269.4,282.1 273.7,278.2 277.4,273.8 282.1,268.1 286.0,266.9 292.8,258.4 299.7,245.6 304.8,240.4 309.9,243.0 319.3,255.0 325.3,266.1 331.3,278.9 335.6,289.1 338.8,296.4 343.5,304.9 347.2,309.6 350.0,320.9 353.8,344.4 357.6,341.5 362.3,334.0 367.0,335.0 372.6,336.8 379.2,332.1 384.8,330.3 391.4,327.4 395.0,327.9 400.0,329.4 404.5,328.3 407.5,329.4 415.1,338.9 419.6,349.4 426.4,353.2 436.2,363.0 440.0,362.3 448.3,369.1 453.6,364.5 461.9,360.8 469.4,353.5 479.2,347.2 486.0,339.6 491.3,337.8 495.1,332.8 504.9,320.8 506.6,319.2 512.0,314.6 514.1,313.9 517.5,297.5 521.6,290.6 525.7,295.4 529.1,289.2 533.2,277.6 536.6,275.6 541.4,272.8 544.8,264.6 548.3,254.4 552.4,251.6 557.4,238.8 561.0,229.9 564.0,225.7 567.6,220.3 571.1,213.1 575.9,205.9 580.7,202.9 583.7,198.2 587.3,194.3 590.9,195.2 594.5,193.4 598.7,192.2 602.2,194.0 607.0,200.0 611.2,202.3 614.8,205.9 619.6,212.5 623.2,215.5 626.8,216.7 630.2,221.1 634.3,226.1 637.7,226.4 642.0,225.6 645.4,228.1 648.8,230.7 653.1,228.1 657.0,225.6 660.8,229.0 665.0,230.7 669.3,231.5 674.4,237.5 680.4,244.4 683.8,248.6 688.1,257.2 694.6,271.2 700.0,281.9 704.6,292.7 710.8,306.5 714.6,308.8 718.5,315.8 723.8,328.1 727.7,327.3 731.5,321.9 734.6,320.4 740.0,324.2 743.1,323.5 747.7,318.1 753.8,314.2 757.7,308.8 761.5,305.0" fill="none" stroke="#000080" stroke-width="1" stroke-linejoin="round" shape-rendering="crispEdges"/>
<text x="205.91" y="420" font-size="11.5" fill="#000" stroke="#000" stroke-width="0.2" textLength="34.01" lengthAdjust="spacingAndGlyphs">Current</text>
<rect x="249" y="408" width="74" height="20" fill="#c0c0c0"/>
<rect x="249" y="408" width="74" height="1" fill="#808080"/>
<rect x="249" y="408" width="1" height="20" fill="#808080"/>
<rect x="250" y="409" width="72" height="1" fill="#000"/>
<rect x="250" y="409" width="1" height="18" fill="#000"/>
<rect x="250" y="426" width="72" height="1" fill="#dfdfdf"/>
<rect x="321" y="409" width="1" height="18" fill="#dfdfdf"/>
<rect x="249" y="427" width="74" height="1" fill="#fff"/>
<rect x="322" y="408" width="1" height="20" fill="#fff"/>
<text x="251.72" y="422" font-size="11.5" fill="#000" stroke="#000" stroke-width="0.2" textLength="34.55" lengthAdjust="spacingAndGlyphs">14.302</text>
<text x="327.20" y="420" font-size="11.5" fill="#000" stroke="#000" stroke-width="0.2" textLength="26.36" lengthAdjust="spacingAndGlyphs">Amps</text>
<text x="209.76" y="451" font-size="11.5" fill="#000" stroke="#000" stroke-width="0.2" textLength="30.72" lengthAdjust="spacingAndGlyphs">Power</text>
<rect x="249" y="439" width="74" height="20" fill="#c0c0c0"/>
<rect x="249" y="439" width="74" height="1" fill="#808080"/>
<rect x="249" y="439" width="1" height="20" fill="#808080"/>
<rect x="250" y="440" width="72" height="1" fill="#000"/>
<rect x="250" y="440" width="1" height="18" fill="#000"/>
<rect x="250" y="457" width="72" height="1" fill="#dfdfdf"/>
<rect x="321" y="440" width="1" height="18" fill="#dfdfdf"/>
<rect x="249" y="458" width="74" height="1" fill="#fff"/>
<rect x="322" y="439" width="1" height="20" fill="#fff"/>
<text x="251.76" y="453" font-size="11.5" fill="#000" stroke="#000" stroke-width="0.2" textLength="42.83" lengthAdjust="spacingAndGlyphs">-3.45384</text>
<text x="326.82" y="451" font-size="11.5" fill="#000" stroke="#000" stroke-width="0.2" textLength="18.20" lengthAdjust="spacingAndGlyphs">KW</text>
<text x="508.76" y="418.5" font-size="11.5" fill="#000" stroke="#000" stroke-width="0.2" textLength="12.16" lengthAdjust="spacingAndGlyphs">@</text>
<rect x="530" y="406" width="62" height="20" fill="#c0c0c0"/>
<rect x="530" y="406" width="62" height="1" fill="#808080"/>
<rect x="530" y="406" width="1" height="20" fill="#808080"/>
<rect x="531" y="407" width="60" height="1" fill="#000"/>
<rect x="531" y="407" width="1" height="18" fill="#000"/>
<rect x="531" y="424" width="60" height="1" fill="#dfdfdf"/>
<rect x="590" y="407" width="1" height="18" fill="#dfdfdf"/>
<rect x="530" y="425" width="62" height="1" fill="#fff"/>
<rect x="591" y="406" width="1" height="20" fill="#fff"/>
<text x="532.78" y="420" font-size="11.5" fill="#000" stroke="#000" stroke-width="0.2" textLength="16.34" lengthAdjust="spacingAndGlyphs">3.5</text>
<text x="601.78" y="420" font-size="11.5" fill="#000" stroke="#000" stroke-width="0.2" textLength="18.35" lengthAdjust="spacingAndGlyphs">sec</text>
<text x="490.00" y="451" font-size="11.5" fill="#000" stroke="#000" stroke-width="0.2" textLength="32.96" lengthAdjust="spacingAndGlyphs">Torque</text>
<rect x="530" y="439" width="75" height="20" fill="#c0c0c0"/>
<rect x="530" y="439" width="75" height="1" fill="#808080"/>
<rect x="530" y="439" width="1" height="20" fill="#808080"/>
<rect x="531" y="440" width="73" height="1" fill="#000"/>
<rect x="531" y="440" width="1" height="18" fill="#000"/>
<rect x="531" y="457" width="73" height="1" fill="#dfdfdf"/>
<rect x="603" y="440" width="1" height="18" fill="#dfdfdf"/>
<rect x="530" y="458" width="75" height="1" fill="#fff"/>
<rect x="604" y="439" width="1" height="20" fill="#fff"/>
<text x="532.36" y="453" font-size="11.5" fill="#000" stroke="#000" stroke-width="0.2" textLength="42.52" lengthAdjust="spacingAndGlyphs">-47.2904</text>
<text x="607.18" y="451" font-size="11.5" fill="#000" stroke="#000" stroke-width="0.2" textLength="27.10" lengthAdjust="spacingAndGlyphs">Kin-lb</text>
<rect x="153" y="485" width="253" height="1" fill="#808080"/>
<rect x="153" y="485" width="1" height="52" fill="#808080"/>
<rect x="154" y="486" width="252" height="1" fill="#fff"/>
<rect x="154" y="486" width="1" height="50" fill="#fff"/>
<rect x="153" y="536" width="253" height="1" fill="#808080"/>
<rect x="405" y="485" width="1" height="52" fill="#808080"/>
<rect x="153" y="537" width="254" height="1" fill="#fff"/>
<rect x="406" y="485" width="1" height="53" fill="#fff"/>
<rect x="214" y="484" width="133" height="4" fill="#c0c0c0"/>
<text x="215.28" y="490" font-size="11.5" fill="#000" stroke="#000" stroke-width="0.2" textLength="129.66" lengthAdjust="spacingAndGlyphs">Indicator Movement Control</text>
<rect x="177" y="502" width="62" height="23" fill="#c0c0c0"/>
<rect x="177" y="502" width="62" height="1" fill="#fff"/>
<rect x="177" y="502" width="1" height="23" fill="#fff"/>
<rect x="178" y="503" width="60" height="1" fill="#dfdfdf"/>
<rect x="178" y="503" width="1" height="21" fill="#dfdfdf"/>
<rect x="178" y="523" width="60" height="1" fill="#808080"/>
<rect x="237" y="503" width="1" height="21" fill="#808080"/>
<rect x="177" y="524" width="62" height="1" fill="#000"/>
<rect x="238" y="502" width="1" height="23" fill="#000"/>
<text x="187.79" y="517" font-size="11.5" fill="#000" stroke="#000" stroke-width="0.2" textLength="39.82" lengthAdjust="spacingAndGlyphs">&lt; --- Left</text>
<rect x="188" y="518" width="6" height="1" fill="#000"/>
<rect x="252" y="502" width="62" height="23" fill="#c0c0c0"/>
<rect x="252" y="502" width="62" height="1" fill="#fff"/>
<rect x="252" y="502" width="1" height="23" fill="#fff"/>
<rect x="253" y="503" width="60" height="1" fill="#dfdfdf"/>
<rect x="253" y="503" width="1" height="21" fill="#dfdfdf"/>
<rect x="253" y="523" width="60" height="1" fill="#808080"/>
<rect x="312" y="503" width="1" height="21" fill="#808080"/>
<rect x="252" y="524" width="62" height="1" fill="#000"/>
<rect x="313" y="502" width="1" height="23" fill="#000"/>
<text x="260.01" y="517" font-size="11.5" fill="#000" stroke="#000" stroke-width="0.2" textLength="45.59" lengthAdjust="spacingAndGlyphs">Right --- &gt;</text>
<rect x="300" y="518" width="6" height="1" fill="#000"/>
<rect x="337" y="501" width="1" height="4" fill="#000"/>
<rect x="342" y="501" width="1" height="4" fill="#000"/>
<rect x="347" y="501" width="1" height="4" fill="#000"/>
<rect x="351" y="501" width="1" height="4" fill="#000"/>
<rect x="356" y="501" width="1" height="4" fill="#000"/>
<rect x="361" y="501" width="1" height="4" fill="#000"/>
<rect x="366" y="501" width="1" height="4" fill="#000"/>
<rect x="371" y="501" width="1" height="4" fill="#000"/>
<rect x="375" y="501" width="1" height="4" fill="#000"/>
<rect x="380" y="501" width="1" height="4" fill="#000"/>
<rect x="385" y="501" width="1" height="4" fill="#000"/>
<rect x="332" y="515" width="58" height="1" fill="#808080"/>
<rect x="332" y="516" width="58" height="1" fill="#000"/>
<rect x="332" y="517" width="59" height="2" fill="#fff"/>
<rect x="390" y="515" width="1" height="4" fill="#fff"/>
<polygon points="351,511 356,506 361,511 361,526 351,526" fill="#c0c0c0"/>
<path d="M351.5,526 V511.5 L356,507" stroke="#fff" fill="none"/>
<path d="M356,506.5 L361.5,511.5 V526.5 H351" stroke="#000" fill="none"/>
<path d="M352,525.5 H360.5 V512" stroke="#808080" fill="none"/>
<rect x="629" y="520" width="23" height="24" fill="#c0c0c0"/>
<rect x="629" y="520" width="23" height="1" fill="#fff"/>
<rect x="629" y="520" width="1" height="24" fill="#fff"/>
<rect x="630" y="521" width="21" height="1" fill="#dfdfdf"/>
<rect x="630" y="521" width="1" height="22" fill="#dfdfdf"/>
<rect x="630" y="542" width="21" height="1" fill="#808080"/>
<rect x="650" y="521" width="1" height="22" fill="#808080"/>
<rect x="629" y="543" width="23" height="1" fill="#000"/>
<rect x="651" y="520" width="1" height="24" fill="#000"/>
<text x="636.88" y="536" font-size="11.5" fill="#000" stroke="#000" stroke-width="0.2" textLength="7.18" lengthAdjust="spacingAndGlyphs">?</text>
<rect x="657" y="520" width="57" height="24" fill="#c0c0c0"/>
<rect x="657" y="520" width="57" height="1" fill="#fff"/>
<rect x="657" y="520" width="1" height="24" fill="#fff"/>
<rect x="658" y="521" width="55" height="1" fill="#dfdfdf"/>
<rect x="658" y="521" width="1" height="22" fill="#dfdfdf"/>
<rect x="658" y="542" width="55" height="1" fill="#808080"/>
<rect x="712" y="521" width="1" height="22" fill="#808080"/>
<rect x="657" y="543" width="57" height="1" fill="#000"/>
<rect x="713" y="520" width="1" height="24" fill="#000"/>
<text x="665.85" y="536" font-size="11.5" fill="#000" stroke="#000" stroke-width="0.2" textLength="39.89" lengthAdjust="spacingAndGlyphs">&lt; Pg Up</text>
<rect x="720" y="520" width="57" height="24" fill="#000"/>
<rect x="721" y="521" width="55" height="22" fill="#c0c0c0"/>
<rect x="721" y="521" width="55" height="1" fill="#fff"/>
<rect x="721" y="521" width="1" height="22" fill="#fff"/>
<rect x="722" y="522" width="53" height="1" fill="#dfdfdf"/>
<rect x="722" y="522" width="1" height="20" fill="#dfdfdf"/>
<rect x="722" y="541" width="53" height="1" fill="#808080"/>
<rect x="774" y="522" width="1" height="20" fill="#808080"/>
<rect x="721" y="542" width="55" height="1" fill="#000"/>
<rect x="775" y="521" width="1" height="22" fill="#000"/>
<rect x="724" y="524" width="1" height="1" fill="#000"/>
<rect x="724" y="540" width="1" height="1" fill="#000"/>
<rect x="726" y="524" width="1" height="1" fill="#000"/>
<rect x="726" y="540" width="1" height="1" fill="#000"/>
<rect x="728" y="524" width="1" height="1" fill="#000"/>
<rect x="728" y="540" width="1" height="1" fill="#000"/>
<rect x="730" y="524" width="1" height="1" fill="#000"/>
<rect x="730" y="540" width="1" height="1" fill="#000"/>
<rect x="732" y="524" width="1" height="1" fill="#000"/>
<rect x="732" y="540" width="1" height="1" fill="#000"/>
<rect x="734" y="524" width="1" height="1" fill="#000"/>
<rect x="734" y="540" width="1" height="1" fill="#000"/>
<rect x="736" y="524" width="1" height="1" fill="#000"/>
<rect x="736" y="540" width="1" height="1" fill="#000"/>
<rect x="738" y="524" width="1" height="1" fill="#000"/>
<rect x="738" y="540" width="1" height="1" fill="#000"/>
<rect x="740" y="524" width="1" height="1" fill="#000"/>
<rect x="740" y="540" width="1" height="1" fill="#000"/>
<rect x="742" y="524" width="1" height="1" fill="#000"/>
<rect x="742" y="540" width="1" height="1" fill="#000"/>
<rect x="744" y="524" width="1" height="1" fill="#000"/>
<rect x="744" y="540" width="1" height="1" fill="#000"/>
<rect x="746" y="524" width="1" height="1" fill="#000"/>
<rect x="746" y="540" width="1" height="1" fill="#000"/>
<rect x="748" y="524" width="1" height="1" fill="#000"/>
<rect x="748" y="540" width="1" height="1" fill="#000"/>
<rect x="750" y="524" width="1" height="1" fill="#000"/>
<rect x="750" y="540" width="1" height="1" fill="#000"/>
<rect x="752" y="524" width="1" height="1" fill="#000"/>
<rect x="752" y="540" width="1" height="1" fill="#000"/>
<rect x="754" y="524" width="1" height="1" fill="#000"/>
<rect x="754" y="540" width="1" height="1" fill="#000"/>
<rect x="756" y="524" width="1" height="1" fill="#000"/>
<rect x="756" y="540" width="1" height="1" fill="#000"/>
<rect x="758" y="524" width="1" height="1" fill="#000"/>
<rect x="758" y="540" width="1" height="1" fill="#000"/>
<rect x="760" y="524" width="1" height="1" fill="#000"/>
<rect x="760" y="540" width="1" height="1" fill="#000"/>
<rect x="762" y="524" width="1" height="1" fill="#000"/>
<rect x="762" y="540" width="1" height="1" fill="#000"/>
<rect x="764" y="524" width="1" height="1" fill="#000"/>
<rect x="764" y="540" width="1" height="1" fill="#000"/>
<rect x="766" y="524" width="1" height="1" fill="#000"/>
<rect x="766" y="540" width="1" height="1" fill="#000"/>
<rect x="768" y="524" width="1" height="1" fill="#000"/>
<rect x="768" y="540" width="1" height="1" fill="#000"/>
<rect x="770" y="524" width="1" height="1" fill="#000"/>
<rect x="770" y="540" width="1" height="1" fill="#000"/>
<rect x="772" y="524" width="1" height="1" fill="#000"/>
<rect x="772" y="540" width="1" height="1" fill="#000"/>
<rect x="724" y="526" width="1" height="1" fill="#000"/>
<rect x="773" y="526" width="1" height="1" fill="#000"/>
<rect x="724" y="528" width="1" height="1" fill="#000"/>
<rect x="773" y="528" width="1" height="1" fill="#000"/>
<rect x="724" y="530" width="1" height="1" fill="#000"/>
<rect x="773" y="530" width="1" height="1" fill="#000"/>
<rect x="724" y="532" width="1" height="1" fill="#000"/>
<rect x="773" y="532" width="1" height="1" fill="#000"/>
<rect x="724" y="534" width="1" height="1" fill="#000"/>
<rect x="773" y="534" width="1" height="1" fill="#000"/>
<rect x="724" y="536" width="1" height="1" fill="#000"/>
<rect x="773" y="536" width="1" height="1" fill="#000"/>
<rect x="724" y="538" width="1" height="1" fill="#000"/>
<rect x="773" y="538" width="1" height="1" fill="#000"/>
<text x="724.57" y="536" font-size="11.5" fill="#000" stroke="#000" stroke-width="0.2" textLength="46.91" lengthAdjust="spacingAndGlyphs">Pg Dwn &gt;</text>
</svg>
</body></html>
